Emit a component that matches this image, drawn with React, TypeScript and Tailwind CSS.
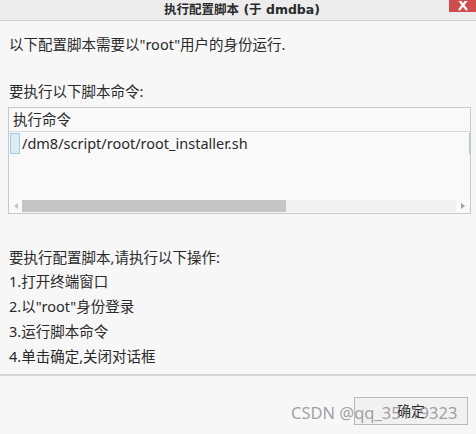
const steps = [
  "1.打开终端窗口",
  "2.以\"root\"身份登录",
  "3.运行脚本命令",
  "4.单击确定,关闭对话框",
];

export default function App() {
  return (
    <div
      className="relative h-[434px] w-[476px] overflow-hidden bg-[#f7f7f7] text-[14.5px] text-[#2a2a2a]"
      style={{ fontFamily: '"Noto Sans", "Noto Sans CJK SC", sans-serif' }}
    >
      {/* title bar */}
      <div className="relative flex h-[21px] items-center justify-center border-b border-[#cfcfcf] bg-[#ececec] pl-[8px]">
        <span
          className="text-[12.5px] font-bold leading-none text-[#2a2a2a]"
          style={{ fontFamily: '"DejaVu Sans", "Noto Sans CJK SC", sans-serif' }}
        >
          执行配置脚本 (于 dmdba)
        </span>
        <div className="absolute right-0 top-0 flex h-[12px] w-[27px] items-end justify-center bg-[#cf4d4d]">
          <svg width="10" height="10" viewBox="0 0 10 10" className="mb-[1px]">
            <path d="M1 -1 L9 9 M9 -1 L1 9" stroke="#fff" strokeWidth="2.2" />
          </svg>
        </div>
      </div>

      <div className="px-[9px]">
        <p className="mt-[13px] leading-[20px]">以下配置脚本需要以"root"用户的身份运行.</p>
        <p className="mt-[27px] leading-[20px]">要执行以下脚本命令:</p>

        {/* command table */}
        <div className="ml-[-1px] mt-[6px] flex h-[107px] w-[463px] flex-col border border-[#c9c9c9] bg-[#f9f9f9]">
          <div className="flex h-[24px] items-center border-b border-[#d9d9d9] pl-[4px] leading-none">执行命令</div>
          <div className="flex h-[22px] items-center">
            <div className="ml-[1px] h-[21px] w-[10px] border border-[#a9c9dd] bg-[#dcebf4]" />
            <span className="ml-[2px] leading-none">/dm8/script/root/root_installer.sh</span>
            <div className="ml-auto h-[21px] w-[1px] bg-[#a9c9dd]" />
          </div>
          <div className="flex-1" />
          {/* horizontal scrollbar */}
          <div className="mb-[1px] flex h-[12px] items-center">
            <div className="flex w-[13px] justify-center">
              <div className="h-0 w-0 border-y-[3px] border-r-[4px] border-y-transparent border-r-[#c4c4c4]" />
            </div>
            <div className="flex h-full flex-1 bg-[#f1f1f1]">
              <div className="h-full w-[264px] bg-[#c5c5c5]" />
            </div>
            <div className="flex w-[14px] justify-center">
              <div className="h-0 w-0 border-y-[3px] border-l-[4px] border-y-transparent border-l-[#a0a0a0]" />
            </div>
          </div>
        </div>

        <p className="mt-[33px] leading-[20px]">要执行配置脚本,请执行以下操作:</p>
        <div className="mt-[4px] flex flex-col gap-[5px]">
          {steps.map((s) => (
            <p key={s} className="leading-[20px]">
              {s}
            </p>
          ))}
        </div>
      </div>

      <div className="mt-[8px] h-[2px] bg-[#d6d6d6]" />

      <div className="flex justify-end pr-[8px] pt-[21px]">
        <button className="flex h-[28px] w-[114px] items-center justify-center border border-[#b9b9b9] bg-[#f1f1f1] text-[14px] leading-none text-[#2a2a2a]">
          确定
        </button>
      </div>

      {/* watermark */}
      <div className="pointer-events-none absolute left-[291px] top-[405px] text-[16.5px] leading-none text-[#8a8a8a]/80">
        CSDN @qq_35119323
      </div>
    </div>
  );
}
